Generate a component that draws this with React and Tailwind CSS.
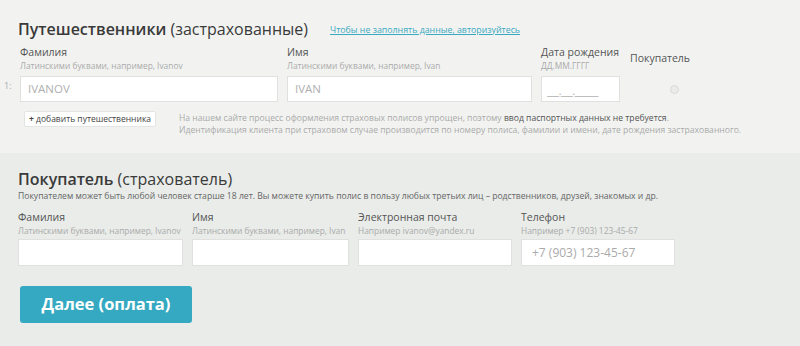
import React from "react";

const font = { fontFamily: "'Open Sans', 'Noto Sans', sans-serif" };

const Field = ({ label, hint, width, placeholder, value }) => (
  <div className="flex flex-col" style={{ width }}>
    <div className="text-[10.5px] leading-[14px] text-[#555] whitespace-nowrap">{label}</div>
    <div className="text-[8.4px] leading-[13px] text-[#aaa] whitespace-nowrap">{hint}</div>
    <div className="mt-[2px] h-[27px] bg-white border border-[#e0e0e0] flex items-center px-[10px] text-[12px] text-[#aaa]">
      {value || placeholder}
    </div>
  </div>
);

const App = () => {
  return (
    <div className="w-[800px] h-[346px] overflow-hidden" style={font}>
      {/* travellers */}
      <div className="h-[153px] bg-[#f2f3f1] pt-[17px]">
        <div className="flex items-center pl-[18px]">
          <h2 className="text-[16px] leading-[24px] text-[#3a3a3a]">
            <span className="font-semibold">Путешественники</span> (застрахованные)
          </h2>
          <a className="ml-[22px] pt-[3px] text-[8.8px] text-[#3aa9c2] underline">
            Чтобы не заполнять данные, авторизуйтесь
          </a>
        </div>

        <div className="flex pl-[4px] mt-[4px]">
          <div className="w-[16px] pt-[34px] text-[9px] text-[#aaa]">1:</div>
          <div className="flex gap-[9px]">
            <div className="w-[258px]">
              <div className="text-[10.5px] leading-[14px] text-[#555]">Фамилия</div>
              <div className="text-[8.4px] leading-[13px] text-[#aaa]">Латинскими буквами, например, Ivanov</div>
              <div className="mt-[4px] h-[26px] bg-white border border-[#e0e0e0] flex items-center px-[7px] text-[11.5px] text-[#b0b0b0]">IVANOV</div>
            </div>
            <div className="w-[245px]">
              <div className="text-[10.5px] leading-[14px] text-[#555]">Имя</div>
              <div className="text-[8.4px] leading-[13px] text-[#aaa]">Латинскими буквами, например, Ivan</div>
              <div className="mt-[4px] h-[26px] bg-white border border-[#e0e0e0] flex items-center px-[7px] text-[11.5px] text-[#b0b0b0]">IVAN</div>
            </div>
            <div className="w-[79px]">
              <div className="text-[10.5px] leading-[14px] text-[#555] whitespace-nowrap">Дата рождения</div>
              <div className="text-[8.4px] leading-[13px] text-[#aaa]">ДД.ММ.ГГГГ</div>
              <div className="mt-[4px] h-[26px] bg-white border border-[#e0e0e0] flex items-center px-[5px] pt-[4px] text-[10px] text-[#aaa] tracking-[-0.5px]">
                ___.___.______
              </div>
            </div>
            <div className="w-[70px] pl-[1px]">
              <div className="pt-[6px] text-[10.5px] leading-[14px] text-[#555]">Покупатель</div>
              <div className="mt-[20px] ml-[40px] w-[9px] h-[9px] rounded-full bg-[#ebebeb] border border-[#d8d8d8]" />
            </div>
          </div>
        </div>

        <div className="flex pl-[24px] mt-[9px]">
          <button className="h-[16px] px-[4px] bg-white border border-[#e4e4e4] rounded-[2px] text-[8.5px] leading-none text-[#444] whitespace-nowrap">
            <span className="font-bold">+</span> добавить путешественника
          </button>
          <div className="ml-[23px] text-[8.6px] leading-[12px] text-[#aaa] pt-[1px]">
            <div>
              На нашем сайте процесс оформления страховых полисов упрощен, поэтому{" "}
              <span className="text-[#555]">ввод паспортных данных не требуется</span>.
            </div>
            <div>
              Идентификация клиента при страховом случае производится по номеру полиса, фамилии и имени, дате рождения застрахованного.
            </div>
          </div>
        </div>
      </div>

      {/* buyer */}
      <div className="h-[193px] bg-[#e9ece9] pl-[18px] pt-[15px]">
        <h2 className="text-[16px] leading-[22px] text-[#3a3a3a]">
          <span className="font-semibold">Покупатель</span> (страхователь)
        </h2>
        <div className="text-[8.6px] leading-[12px] text-[#666] whitespace-nowrap">
          Покупателем может быть любой человек старше 18 лет. Вы можете купить полис в пользу любых третьих лиц – родственников, друзей, знакомых и др.
        </div>

        <div className="flex gap-[9px] mt-[8px]">
          <Field width="165px" label="Фамилия" hint="Латинскими буквами, например, Ivanov" />
          <Field width="157px" label="Имя" hint="Латинскими буквами, например, Ivan" />
          <Field width="154px" label="Электронная почта" hint="Например ivanov@yandex.ru" />
          <Field width="154px" label="Телефон" hint="Например +7 (903) 123-45-67" placeholder="+7 (903) 123-45-67" />
        </div>

        <button className="mt-[20px] ml-[2px] w-[172px] h-[37px] rounded-[3px] bg-[#35a9c1] text-white font-bold text-[16.5px]">
          Далее (оплата)
        </button>
      </div>
    </div>
  );
};

export default App;
